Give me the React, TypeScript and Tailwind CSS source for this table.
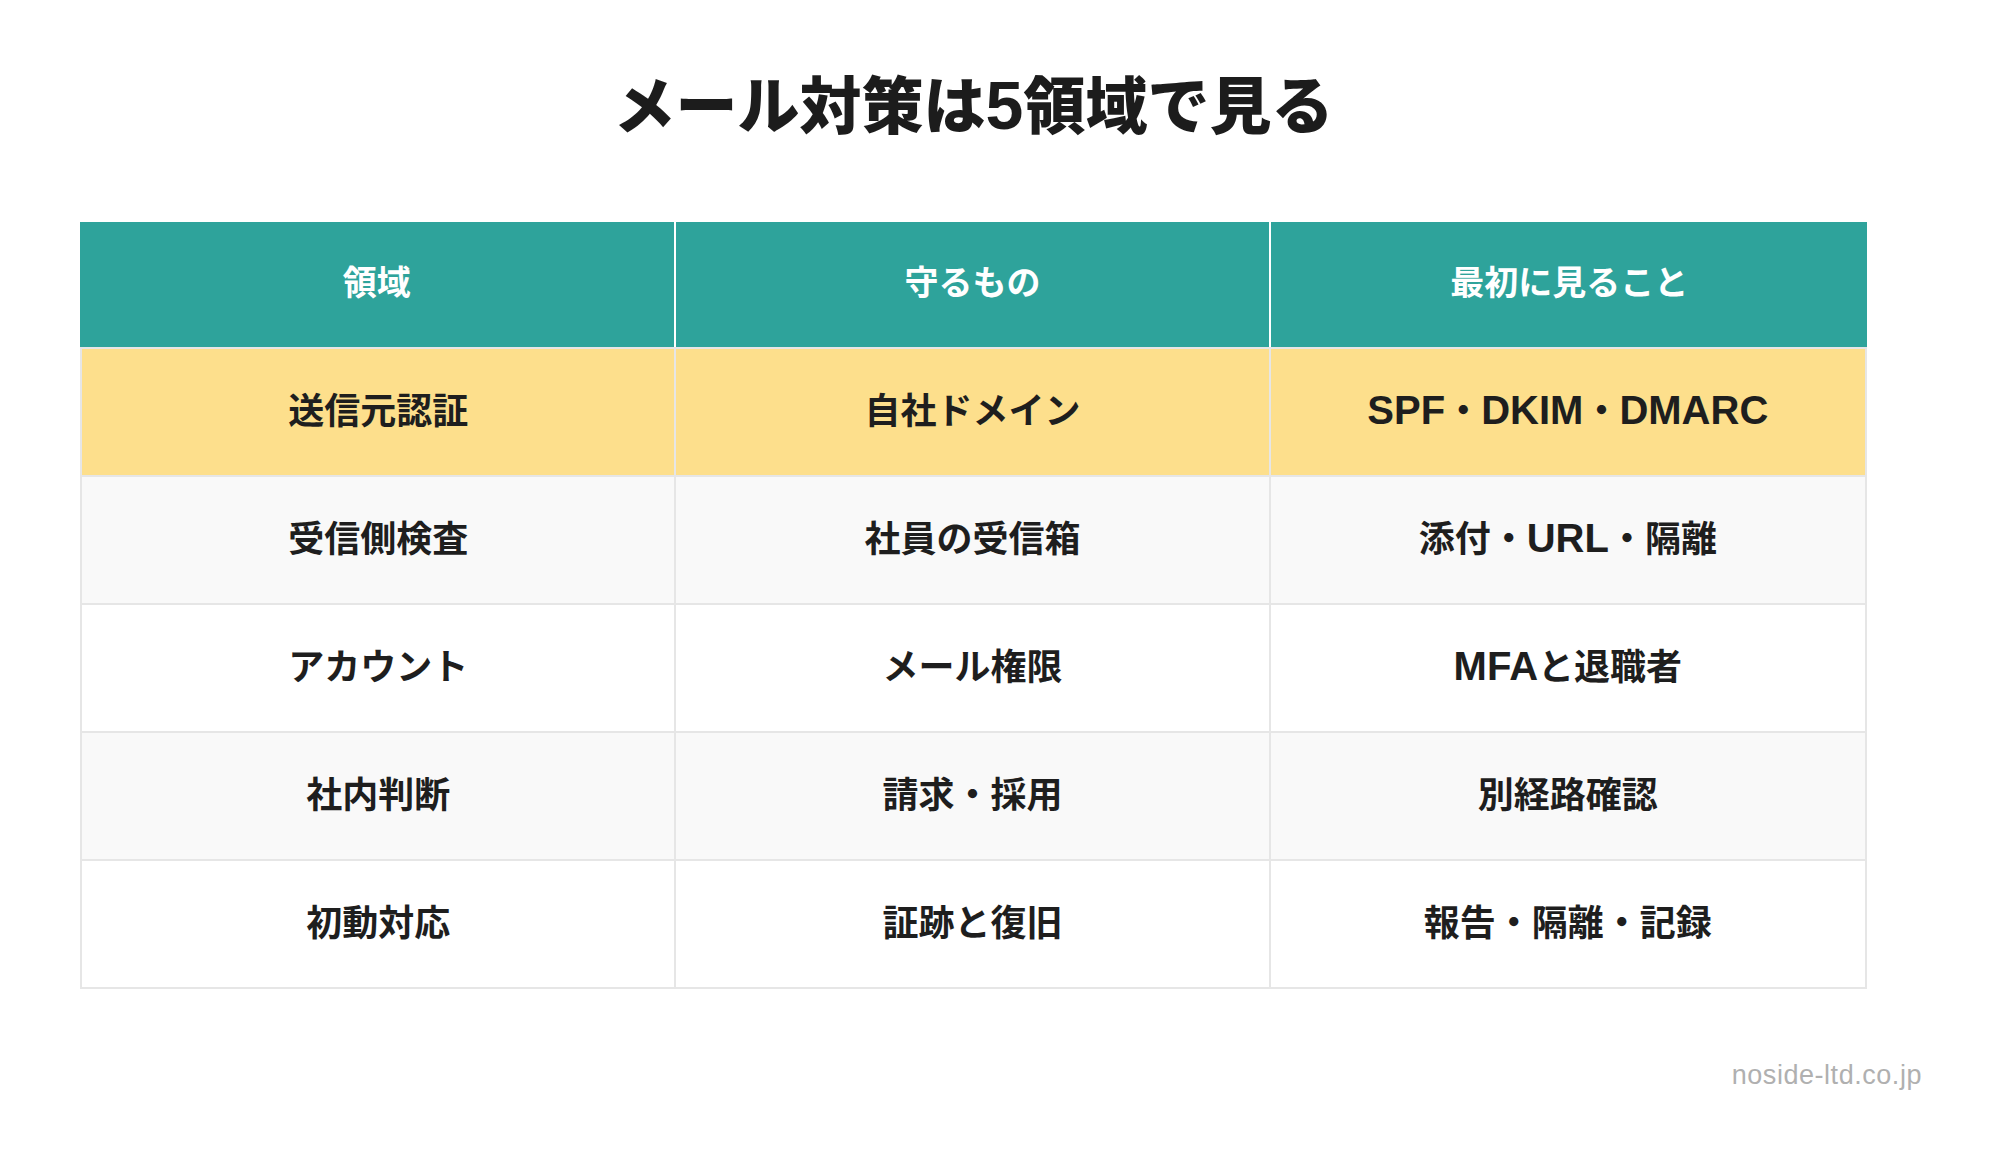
import React from "react";

const rows = [
  { bg: "bg-[#fddf8c]", cells: ["送信元認証", "自社ドメイン", "SPF・DKIM・DMARC"] },
  { bg: "bg-[#f9f9f9]", cells: ["受信側検査", "社員の受信箱", "添付・URL・隔離"] },
  { bg: "bg-white", cells: ["アカウント", "メール権限", "MFAと退職者"] },
  { bg: "bg-[#f9f9f9]", cells: ["社内判断", "請求・採用", "別経路確認"] },
  { bg: "bg-white", cells: ["初動対応", "証跡と復旧", "報告・隔離・記録"] },
];

const headers = ["領域", "守るもの", "最初に見ること"];

// latin runs get a wider/larger face so they sit like the original mixed text
function Mixed({ text, latinClass }: { text: string; latinClass: string }) {
  const parts = text.split(/([A-Za-z0-9]+)/);
  return (
    <>
      {parts.map((p, i) =>
        i % 2 === 1 ? (
          <span key={i} className={latinClass}>
            {p}
          </span>
        ) : (
          <span key={i}>{p}</span>
        )
      )}
    </>
  );
}

export default function App() {
  return (
    <div
      className="w-[2003px] h-[1170px] bg-white flex flex-col"
      style={{ fontFamily: '"Noto Sans CJK JP", "Noto Sans", sans-serif' }}
    >
      <div className="pl-[80px] pt-[71px]">
        <div className="w-[1787px]">
          <h1 className="text-center text-[62px] leading-none font-black text-[#1c1c1c]">
            <Mixed text="メール対策は5領域で見る" latinClass="font-['Liberation_Sans'] text-[68px] leading-none font-bold" />
          </h1>

          <div className="mt-[83px]">
            <div className="grid grid-cols-3 h-[125px] bg-[#2ea39b] divide-x-2 divide-white">
              {headers.map((h) => (
                <div key={h} className="flex items-center justify-center pb-[9px] text-white text-[34px] font-bold">
                  {h}
                </div>
              ))}
            </div>

            {rows.map((r, ri) => (
              <div
                key={ri}
                className={`grid grid-cols-3 h-[128px] border-x-2 border-t-2 border-[#e6e6e6] divide-x-2 divide-[#e6e6e6] ${r.bg} ${ri === rows.length - 1 ? "h-[130px] border-b-2" : ""}`}
              >
                {r.cells.map((c, ci) => (
                  <div key={ci} className="flex items-center justify-center pb-[9px] text-[36px] font-bold text-[#1e1e1e]">
                    <Mixed text={c} latinClass="relative top-[2px] font-['Liberation_Sans'] text-[40px] font-bold" />
                  </div>
                ))}
              </div>
            ))}
          </div>
        </div>
      </div>

      <div className="mt-[73px] flex justify-end pr-[81px]">
        <span className="font-['Liberation_Sans'] text-[27px] leading-none tracking-[0.02em] text-[#b0b0b0]">
          noside-ltd.co.jp
        </span>
      </div>
    </div>
  );
}
